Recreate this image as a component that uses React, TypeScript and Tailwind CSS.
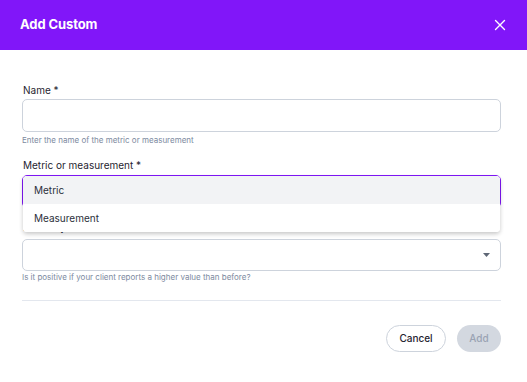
import React from "react";

export default function App() {
  return (
    <div className="w-[527px] h-[382px] bg-white overflow-hidden" style={{ fontFamily: "Inter, 'Noto Sans', sans-serif" }}>
      <div className="h-[50px] bg-[#8116f9] flex items-center justify-between pl-[20px] pr-[21px]">
        <span className="text-[13px] font-bold text-white tracking-[-0.1px]">Add Custom</span>
        <svg width="12" height="12" viewBox="0 0 12 12" fill="none" stroke="white" strokeWidth="1.4" strokeLinecap="round">
          <path d="M1.5 1.5 L10.5 10.5 M10.5 1.5 L1.5 10.5" />
        </svg>
      </div>
      <div className="pl-[22px] pr-[26px] pt-[33px]">
        <div className="text-[10px] leading-[14px] text-[#1f2430] pl-[1px]">Name *</div>
        <div className="mt-[2px] h-[33px] border border-[#cdd3dc] rounded-[5px]" />
        <div className="mt-[3px] text-[8px] leading-[10px] text-[#7d8aa0]">Enter the name of the metric or measurement</div>

        <div className="mt-[13px] text-[10px] leading-[14px] text-[#1f2430] pl-[1px]">Metric or measurement *</div>
        <div className="relative mt-[3px] h-[33px] border border-[#8116f9] rounded-[5px]">
          <div className="absolute left-0 right-0 top-0 bg-white rounded-[4px] shadow-[0_2px_4px_rgba(0,0,0,0.22)] z-10 overflow-hidden">
            <div className="h-[28px] bg-[#f2f3f5] flex items-center pl-[11px] text-[10px] text-[#2b303b]">Metric</div>
            <div className="h-[28px] bg-white flex items-center pl-[11px] text-[10px] text-[#2b303b]">Measurement</div>
          </div>
        </div>

        <div className="mt-[12px] text-[10px] leading-[14px] text-[#1f2430] pl-[1px]">Positivity *</div>
        <div className="relative mt-[5px] h-[32px] border border-[#cdd3dc] rounded-[5px] flex items-center justify-end pr-[10px]">
          <svg width="7" height="4" viewBox="0 0 7 4">
            <path d="M0 0 L7 0 L3.5 4 Z" fill="#5f6776" />
          </svg>
        </div>
        <div className="mt-[1px] text-[8px] leading-[10px] text-[#7d8aa0]">Is it positive if your client reports a higher value than before?</div>

        <div className="mt-[18px] h-px bg-[#e3e7ee]" />

        <div className="mt-[24px] flex justify-end gap-[11px]">
          <button className="h-[27px] w-[60px] rounded-full border border-[#cdd3dc] bg-white text-[10px] text-[#1f2430] font-medium">Cancel</button>
          <button className="h-[27px] w-[44px] rounded-full bg-[#d3d8e0] text-[10px] text-[#9aa3b3] font-medium">Add</button>
        </div>
      </div>
    </div>
  );
}
